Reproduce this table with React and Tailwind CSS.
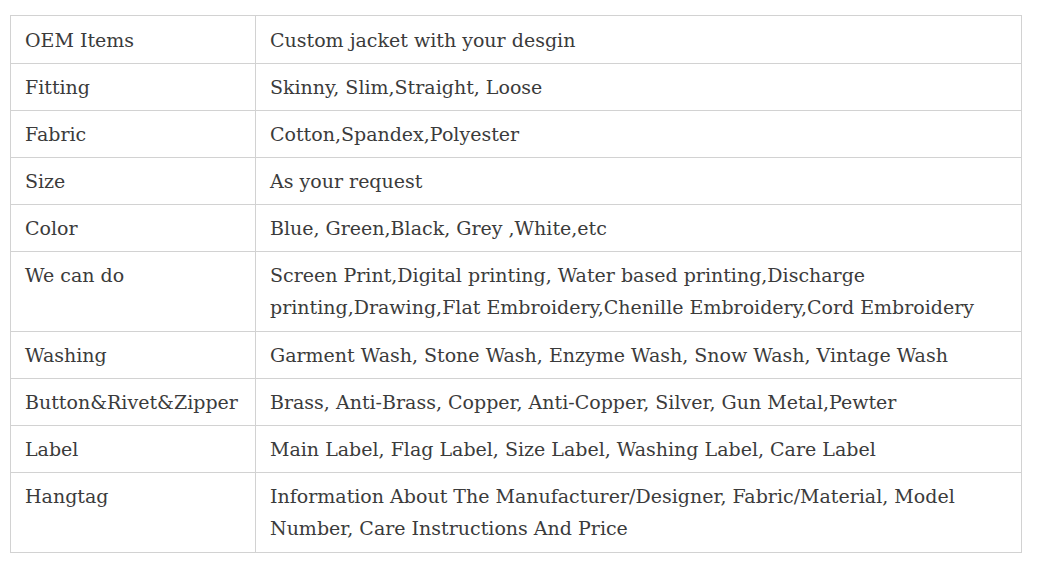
const rows = [
  ['OEM Items', 'Custom jacket with your desgin'],
  ['Fitting', 'Skinny, Slim,Straight, Loose'],
  ['Fabric', 'Cotton,Spandex,Polyester'],
  ['Size', 'As your request'],
  ['Color', 'Blue, Green,Black, Grey ,White,etc'],
  ['We can do', 'Screen Print,Digital printing, Water based printing,Discharge printing,Drawing,Flat Embroidery,Chenille Embroidery,Cord Embroidery', true],
  ['Washing', 'Garment Wash, Stone Wash, Enzyme Wash, Snow Wash, Vintage Wash'],
  ['Button&Rivet&Zipper', 'Brass, Anti-Brass, Copper, Anti-Copper, Silver, Gun Metal,Pewter'],
  ['Label', 'Main Label, Flag Label, Size Label, Washing Label, Care Label'],
  ['Hangtag', 'Information About The Manufacturer/Designer, Fabric/Material, Model Number, Care Instructions And Price', true],
];

export default function App() {
  return (
    <div className="w-[1060px] h-[574px] bg-white pt-[15px] pl-[10px]">
      <table
        className="w-[1012px] table-fixed border-collapse text-[19px] leading-[32px] text-[#3b3b3b]"
        style={{ fontFamily: '"DejaVu Serif", Georgia, serif' }}
      >
        <colgroup>
          <col className="w-[245px]" />
          <col />
        </colgroup>
        <tbody>
          {rows.map(([k, v, tall], i) => (
            <tr key={k} className={i === 0 ? 'h-[48px]' : tall ? 'h-[80px]' : 'h-[47px]'}>
              <td className={`border border-[#d2d2d2] pl-[14px] pr-1 align-top whitespace-nowrap ${i === 0 ? 'pt-[8px]' : 'pt-[7px]'}`}>{k}</td>
              <td className={`border border-[#d2d2d2] pl-[14px] pr-10 align-top ${i === 0 ? 'pt-[8px]' : 'pt-[7px]'}`}>{v}</td>
            </tr>
          ))}
        </tbody>
      </table>
    </div>
  );
}
